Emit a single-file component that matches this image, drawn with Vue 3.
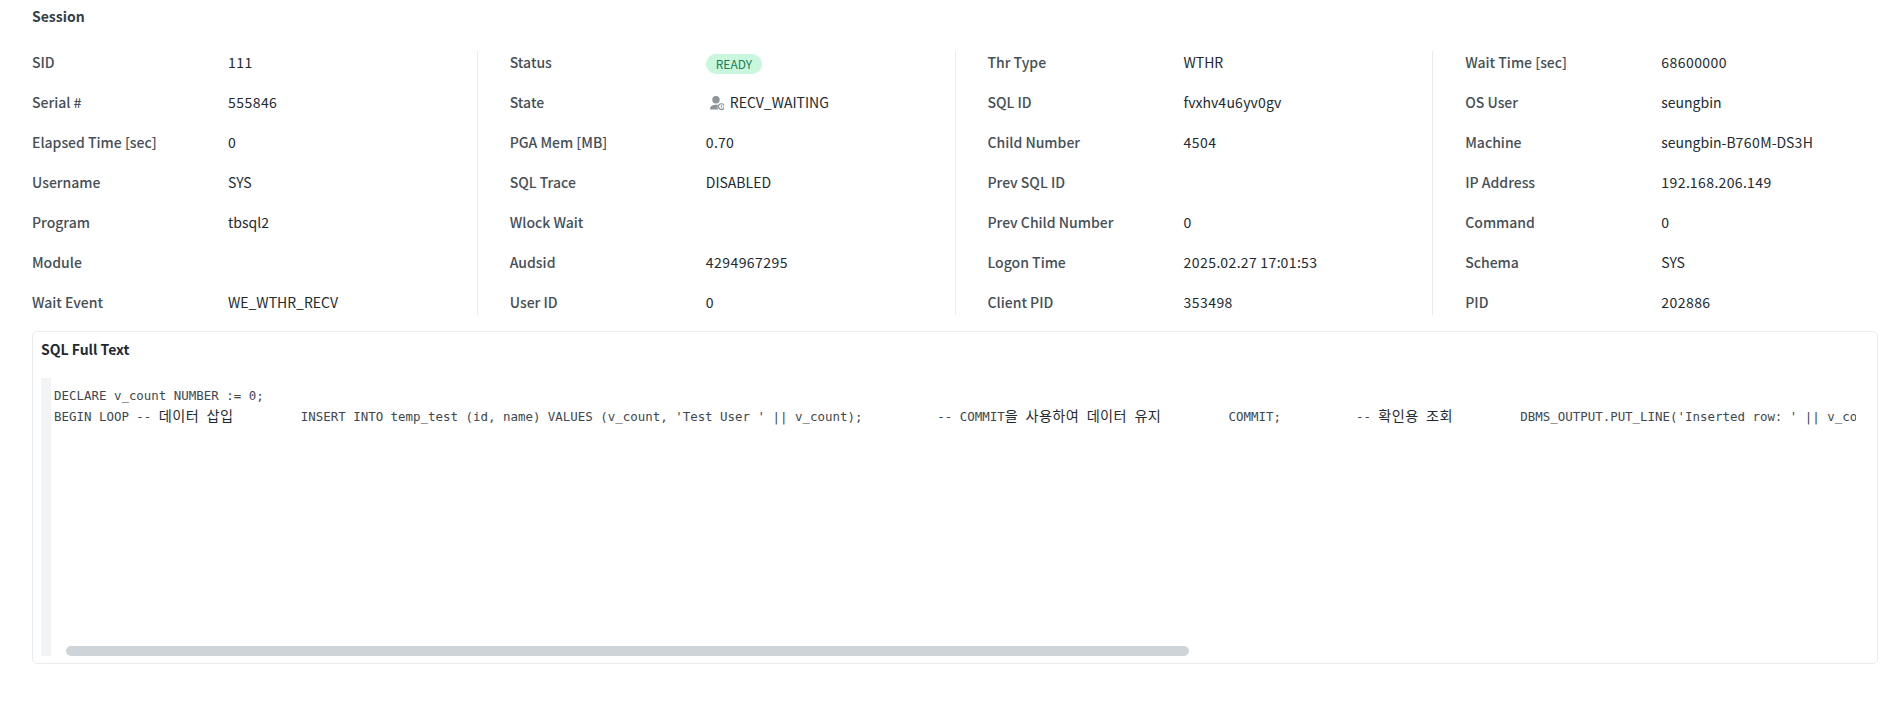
<script setup>
const columns = [
  [['SID','111'],['Serial #','555846'],['Elapsed Time [sec]','0'],['Username','SYS'],['Program','tbsql2'],['Module',''],['Wait Event','WE_WTHR_RECV']],
  [['Status','READY','badge'],['State','RECV_WAITING','icon'],['PGA Mem [MB]','0.70'],['SQL Trace','DISABLED'],['Wlock Wait',''],['Audsid','4294967295'],['User ID','0']],
  [['Thr Type','WTHR'],['SQL ID','fvxhv4u6yv0gv'],['Child Number','4504'],['Prev SQL ID',''],['Prev Child Number','0'],['Logon Time','2025.02.27 17:01:53'],['Client PID','353498']],
  [['Wait Time [sec]','68600000'],['OS User','seungbin'],['Machine','seungbin-B760M-DS3H'],['IP Address','192.168.206.149'],['Command','0'],['Schema','SYS'],['PID','202886']],
]
const runs = (s) => s.split(/(\d+)/).filter(Boolean).map((t) => ({ t, num: /^\d/.test(t) }))
const hangul = (s) => s.split(/([가-힣]+)/).filter(Boolean).map((t) => ({ t, ko: /^[가-힣]/.test(t) }))
const sp = (n) => ' '.repeat(n)
const line1 = 'DECLARE v_count NUMBER := 0;'
const line2 = hangul("BEGIN LOOP -- 데이터 삽입" + sp(9) + "INSERT INTO temp_test (id, name) VALUES (v_count, 'Test User ' || v_count);" + sp(10) + "-- COMMIT을 사용하여 데이터 유지" + sp(9) + "COMMIT;" + sp(10) + "-- 확인용 조회" + sp(9) + "DBMS_OUTPUT.PUT_LINE('Inserted row: ' || v_count);")
</script>

<template>
  <main class="page">
    <h2 class="title">Session</h2>
    <section class="grid">
      <div v-for="(col, i) in columns" :key="i" class="col">
        <div v-for="row in col" :key="row[0]" class="row">
          <span class="label">{{ row[0] }}</span>
          <span class="value">
            <span v-if="row[2] === 'badge'" class="badge">{{ row[1] }}</span>
            <svg v-if="row[2] === 'icon'" class="ico" width="18" height="18" viewBox="0 0 18 18">
              <circle cx="10" cy="6.7" r="3.7" fill="#8d949a"/>
              <path d="M4.2 16.6v-1.5c0-2 2.6-3.4 5.8-3.4.9 0 1.6.1 2.3.3a4 4 0 0 0-.2 4.6z" fill="#8d949a"/>
              <circle cx="15.4" cy="13.6" r="2.9" fill="#fff" stroke="#868e96" stroke-width="1.1"/>
              <path d="M15.4 12.2v2.4" stroke="#868e96" stroke-width="1" fill="none"/>
            </svg>
            <span v-if="row[2] !== 'badge'" class="runs"><span v-for="(r, k) in runs(row[1])" :key="k" :class="{ num: r.num }">{{ r.t }}</span></span>
          </span>
        </div>
      </div>
    </section>
    <section class="card">
      <h3 class="card-title">SQL Full Text</h3>
      <div class="code">
        <pre class="text">{{ line1 }}
<span v-for="(s, k) in line2" :key="k" :class="{ ko: s.ko }">{{ s.t }}</span></pre>
        <div class="thumb"></div>
      </div>
    </section>
  </main>
</template>

<style>
html, body { margin: 0; background: #fff; }
</style>

<style scoped>
.page {
  box-sizing: border-box;
  width: 1894px;
  padding: 6px 16px 0 32px;
  font-family: "Noto Sans CJK KR", "Noto Sans", sans-serif;
  font-size: 14px;
  color: #1f2933;
}
.title {
  margin: 0;
  height: 21px;
  line-height: 21px;
  font-size: 14px;
  font-weight: 600;
  color: #343f47;
}
.grid {
  display: flex;
  margin-top: 24px;
}
.col {
  flex: 1 1 0;
  min-width: 0;
  display: flex;
  flex-direction: column;
  gap: 16px;
  padding: 0 32px;
  border-right: 1px solid #e9ecef;
}
.col:first-child { padding-left: 0; }
.col:last-child { padding-right: 0; border-right: 0; }
.row {
  box-sizing: border-box;
  display: flex;
  align-items: center;
  height: 24px;
  padding-bottom: 2px;
}
.label {
  width: 196px;
  flex: none;
  font-weight: 500;
  color: #454f57;
}
.value {
  display: flex;
  align-items: center;
  color: #212a31;
}
.num { letter-spacing: 0.45px; }
.badge {
  display: block;
  height: 20px;
  line-height: 20px;
  margin-top: 4px;
  padding: 0 10px;
  border-radius: 10px;
  background: #c9f7de;
  color: #1c7c54;
  font-size: 12px;
}
.ico { margin-right: 6px; flex: none; }
.card {
  box-sizing: border-box;
  height: 333px;
  margin-top: 16px;
  padding: 7px 8px 8px;
  border: 1px solid #e9ecef;
  border-radius: 5px;
}
.card-title {
  margin: 0;
  height: 21px;
  line-height: 21px;
  font-size: 14px;
  font-weight: 700;
  color: #1f2933;
}
.code {
  box-sizing: border-box;
  height: 278px;
  margin-top: 18px;
  border-left: 10px solid #f1f3f5;
  position: relative;
  overflow: hidden;
}
.text {
  margin: 0 13px 0 0;
  padding: 7px 0 0 3px;
  height: 240px;
  overflow: hidden;
  font-family: "DejaVu Sans Mono", "Liberation Mono", monospace;
  font-size: 12.44px;
  line-height: 21px;
  color: #3d474f;
}
.ko {
  font-family: "Noto Sans CJK KR", sans-serif;
  font-size: 14.2px;
  font-weight: 400;
  line-height: 1;
  letter-spacing: 0.35px;
  color: #1f2933;
}
.thumb {
  position: absolute;
  left: 15px;
  bottom: 0;
  width: 1123px;
  height: 10px;
  border-radius: 5px;
  background: #cfd4d8;
}
</style>
